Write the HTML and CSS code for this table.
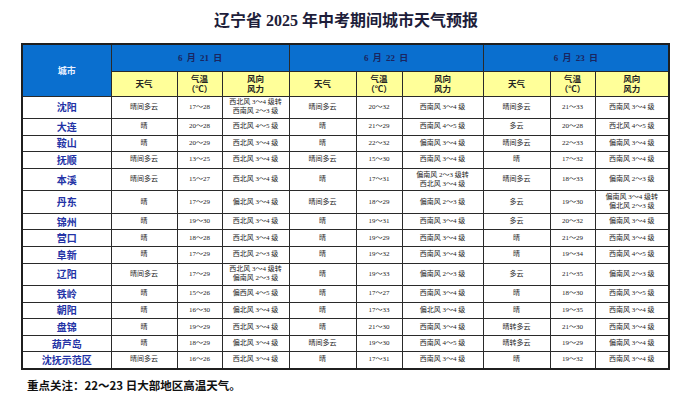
FILE: index.html
```html
<!DOCTYPE html>
<html lang="zh-CN">
<head>
<meta charset="utf-8">
<link rel="stylesheet" href="styles.css">
</head>
<body>
<h1 class="title">辽宁省 2025 年中考期间城市天气预报</h1>
<table class="wx">
<colgroup>
<col class="c-city"><col class="c-w1"><col class="c-t1"><col class="c-f1"><col class="c-w2"><col class="c-t2"><col class="c-f2"><col class="c-w3"><col class="c-t3"><col class="c-f3">
</colgroup>
<thead>
<tr class="r-date"><th class="h-city" rowspan="2">城市</th><th class="h-date" colspan="3">6 月 21 日</th><th class="h-date" colspan="3">6 月 22 日</th><th class="h-date" colspan="3">6 月 23 日</th></tr>
<tr class="r-sub"><th class="h-sub">天气</th><th class="h-sub">气温<br>（℃）</th><th class="h-sub">风向<br>风力</th><th class="h-sub">天气</th><th class="h-sub">气温<br>（℃）</th><th class="h-sub">风向<br>风力</th><th class="h-sub">天气</th><th class="h-sub">气温<br>（℃）</th><th class="h-sub">风向<br>风力</th></tr>
</thead>
<tbody>
<tr class="dbl"><td class="city">沈阳</td><td>晴间多云</td><td>17～28</td><td>西北风 3～4 级转<br>西南风 2～3 级</td><td>晴间多云</td><td>20～32</td><td>西南风 3～4 级</td><td>晴间多云</td><td>21～33</td><td>西南风 3～4 级</td></tr>
<tr class="sgl"><td class="city">大连</td><td>晴</td><td>20～28</td><td>西北风 4～5 级</td><td>晴</td><td>21～29</td><td>西南风 4～5 级</td><td>多云</td><td>20～28</td><td>西北风 4～5 级</td></tr>
<tr class="sgl"><td class="city">鞍山</td><td>晴</td><td>20～29</td><td>西北风 3～4 级</td><td>晴</td><td>22～32</td><td>偏南风 3～4 级</td><td>晴间多云</td><td>22～33</td><td>偏南风 3～4 级</td></tr>
<tr class="sgl"><td class="city">抚顺</td><td>晴间多云</td><td>13～25</td><td>西北风 3～4 级</td><td>晴间多云</td><td>15～30</td><td>西南风 3～4 级</td><td>晴</td><td>17～32</td><td>西南风 3～4 级</td></tr>
<tr class="dbl"><td class="city">本溪</td><td>晴间多云</td><td>15～27</td><td>西北风 3～4 级</td><td>晴</td><td>17～31</td><td>偏南风 2～3 级转<br>西北风 3～4 级</td><td>晴间多云</td><td>18～33</td><td>偏南风 2～3 级</td></tr>
<tr class="dbl"><td class="city">丹东</td><td>晴</td><td>17～29</td><td>偏北风 3～4 级</td><td>晴间多云</td><td>18～29</td><td>偏南风 2～3 级</td><td>多云</td><td>19～30</td><td>偏南风 3～4 级转<br>偏北风 2～3 级</td></tr>
<tr class="sgl"><td class="city">锦州</td><td>晴</td><td>19～30</td><td>西北风 3～4 级</td><td>晴</td><td>19～31</td><td>西南风 3～4 级</td><td>多云</td><td>20～32</td><td>偏南风 3～4 级</td></tr>
<tr class="sgl"><td class="city">营口</td><td>晴</td><td>18～28</td><td>西北风 3～4 级</td><td>晴</td><td>19～29</td><td>西南风 3～4 级</td><td>晴</td><td>21～29</td><td>西南风 3～4 级</td></tr>
<tr class="sgl"><td class="city">阜新</td><td>晴</td><td>17～29</td><td>西北风 2～3 级</td><td>晴</td><td>19～32</td><td>西南风 3～4 级</td><td>晴</td><td>19～34</td><td>西南风 4～5 级</td></tr>
<tr class="dbl"><td class="city">辽阳</td><td>晴间多云</td><td>17～29</td><td>西北风 3～4 级转<br>偏南风 2～3 级</td><td>晴</td><td>19～33</td><td>偏南风 2～3 级</td><td>多云</td><td>21～35</td><td>偏南风 2～3 级</td></tr>
<tr class="sgl"><td class="city">铁岭</td><td>晴</td><td>15～26</td><td>偏西风 4～5 级</td><td>晴</td><td>17～27</td><td>西南风 3～4 级</td><td>晴</td><td>18～30</td><td>西南风 3～5 级</td></tr>
<tr class="sgl"><td class="city">朝阳</td><td>晴</td><td>16～30</td><td>偏北风 3～4 级</td><td>晴</td><td>17～33</td><td>偏北风 3～4 级</td><td>晴</td><td>19～35</td><td>西南风 3～4 级</td></tr>
<tr class="sgl"><td class="city">盘锦</td><td>晴</td><td>19～29</td><td>西北风 3～4 级</td><td>晴</td><td>21～30</td><td>西南风 3～4 级</td><td>晴转多云</td><td>21～30</td><td>西南风 3～4 级</td></tr>
<tr class="sgl"><td class="city">葫芦岛</td><td>晴</td><td>18～29</td><td>偏北风 3～4 级</td><td>晴间多云</td><td>19～30</td><td>西南风 4～5 级</td><td>晴转多云</td><td>19～29</td><td>偏南风 3～4 级</td></tr>
<tr class="sgl"><td class="city">沈抚示范区</td><td>晴间多云</td><td>16～26</td><td>西北风 3～4 级</td><td>晴</td><td>17～31</td><td>西南风 3～4 级</td><td>晴</td><td>19～32</td><td>西南风 3～4 级</td></tr>
</tbody>
</table>
<p class="note">重点关注：22～23 日大部地区高温天气。</p>
</body>
</html>
```
FILE: styles.css
```css
html, body {
  margin: 0;
  padding: 0;
  background: #ffffff;
}
body {
  font-family: "Liberation Serif", "Noto Sans CJK SC", serif;
  color: #222;
}
.title {
  margin: 0;
  padding-top: 11px;
  height: 32px;
  box-sizing: border-box;
  text-align: center;
  font-size: 16px;
  line-height: 20px;
  font-weight: 700;
  color: #1d1d3a;
  font-family: "Liberation Serif", "Noto Sans CJK SC", serif;
}
.wx {
  margin: 11px 0 0 21px;
  width: 647px;
  table-layout: fixed;
  border-collapse: collapse;
  border: 2px solid #1f1f1f;
}
.c-city { width: 89px; }
.c-w1 { width: 66px; }
.c-t1 { width: 45px; }
.c-f1 { width: 67px; }
.c-w2 { width: 67px; }
.c-t2 { width: 46px; }
.c-f2 { width: 81px; }
.c-w3 { width: 67px; }
.c-t3 { width: 45px; }
.c-f3 { width: 74px; }
.wx th, .wx td {
  border: 1px solid #2a2a2a;
  padding: 0;
  text-align: center;
  vertical-align: middle;
}
.r-date { height: 27px; }
.r-sub { height: 25px; }
.h-city {
  background: #0a6fcf;
  color: #e8f0ff;
  font-size: 9px;
  font-weight: 700;
}
.h-date {
  background: #0a6fcf;
  color: #1a2560;
  font-size: 9px;
  font-weight: 700;
  word-spacing: 2px;
}
.h-sub {
  background: #ffff99;
  color: #222;
  font-size: 8.5px;
  line-height: 10px;
  font-weight: 700;
}
.wx td {
  font-size: 7px;
  line-height: 9px;
  color: #1e1e1e;
}
.sgl { height: 16.6px; }
.dbl { height: 22.5px; }
.wx td.city {
  font-family: "Noto Sans CJK SC", sans-serif;
  font-size: 10px;
  line-height: 12px;
  font-weight: 700;
  color: #2433a6;
}
.note {
  margin: 7px 0 0 27px;
  font-family: "Noto Sans CJK SC", sans-serif;
  font-size: 11.5px;
  line-height: 16px;
  font-weight: 700;
  color: #111;
}
```
